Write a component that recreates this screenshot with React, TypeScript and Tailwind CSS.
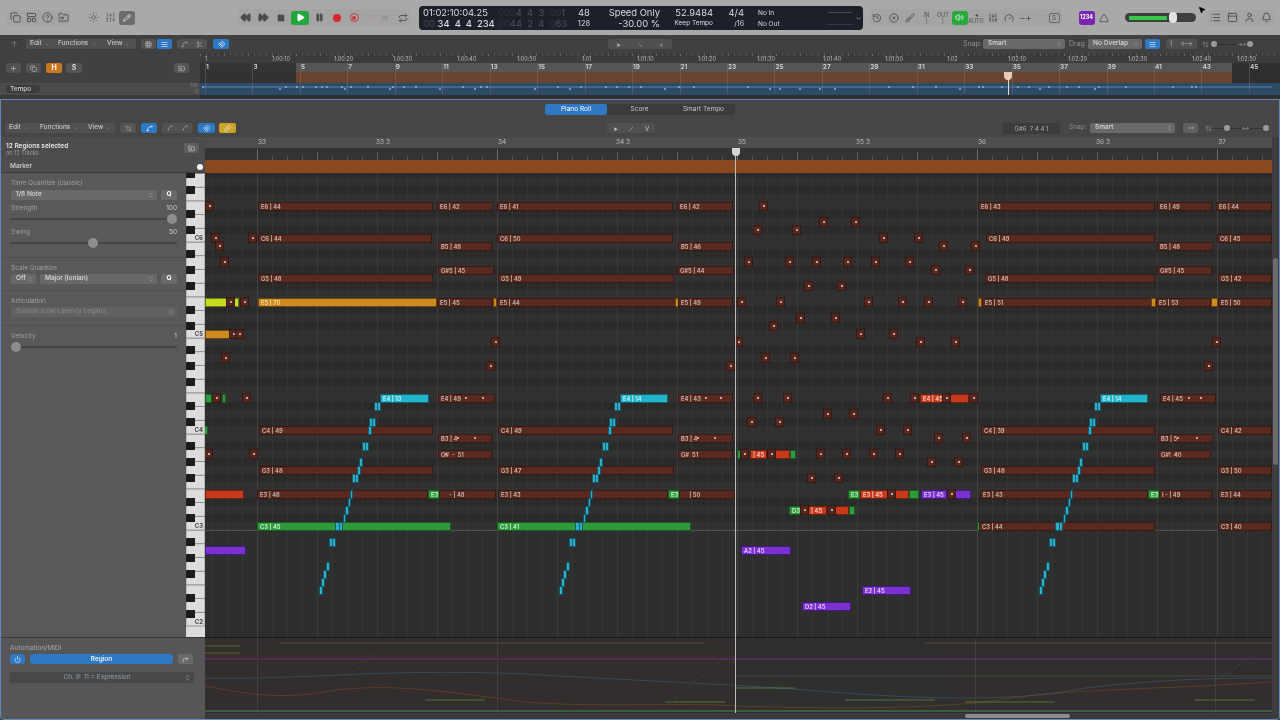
import React from 'react';
import {
  Bell, Copy, CircleHelp, Sun, SlidersVertical, Pencil, Rewind, FastForward, Square, Play, Pause, Repeat,
  History, CircleX, Volume2, Gauge, List, PanelTop, User, FolderInput, ChevronDown, ChevronsUpDown,
  Power, CornerUpRight, Plus, Grid3x3, AlignJustify, Spline, Magnet, Link, MousePointer2, LayoutPanelTop,
  Triangle, Scissors, ArrowUpDown, MoveHorizontal, Brush,
} from 'lucide-react';

type Kind = 'm' | 'o' | 'l' | 'c' | 'g' | 'r' | 'p';
type N = [number, number, number, Kind, string?];

const kindClass: Record<Kind, string> = {
  m: 'bg-[#5a2a22] border-[#361a14] text-[#cfbdb3]',
  o: 'bg-[#cf8a1f] border-[#6b470f] text-[#f0dcae]',
  l: 'bg-[#c6dc20] border-[#6e7a12] text-white',
  c: 'bg-[#22b4cc] border-[#14626f] text-[#d4f2f8]',
  g: 'bg-[#2f9a3a] border-[#185c20] text-[#d6f0d8]',
  r: 'bg-[#c93a1c] border-[#6e2010] text-[#f5d4c8]',
  p: 'bg-[#7a30d2] border-[#43197a] text-[#e4d2f8]',
};

const notes: N[] = [
  [258, 433, 206, 'm', 'E6 | 44'], [437, 493, 206, 'm', 'E6 | 42'], [497, 673, 206, 'm', 'E6 | 41'], [677, 733, 206, 'm', 'E6 | 42'],
  [978, 1155, 206, 'm', 'E6 | 43'], [1157, 1212, 206, 'm', 'E6 | 49'], [1216, 1272, 206, 'm', 'E6 | 44'],
  [258, 432, 238, 'm', 'C6 | 44'], [497, 673, 238, 'm', 'C6 | 50'], [986, 1155, 238, 'm', 'C6 | 49'], [1217, 1272, 238, 'm', 'C6 | 45'],
  [438, 492, 246, 'm', 'B5 | 48'], [678, 733, 246, 'm', 'B5 | 46'], [1157, 1213, 246, 'm', 'B5 | 48'],
  [438, 494, 270, 'm', 'G#5 | 45'], [677, 734, 270, 'm', 'G#5 | 44'], [1157, 1212, 270, 'm', 'G#5 | 45'],
  [258, 433, 278, 'm', 'G5 | 48'], [498, 674, 278, 'm', 'G5 | 49'], [985, 1155, 278, 'm', 'G5 | 48'], [1218, 1272, 278, 'm', 'G5 | 42'],
  [205, 227, 302, 'l'], [234, 239, 302, 'l'], [258, 437, 302, 'o', 'E5 | 70'], [437, 493, 302, 'm', 'E5 | 45'], [493, 497, 302, 'o'],
  [497, 676, 302, 'm', 'E5 | 44'], [675, 678, 302, 'o'], [678, 733, 302, 'm', 'E5 | 49'],
  [978, 982, 302, 'o'], [982, 1152, 302, 'm', 'E5 | 51'], [1151, 1156, 302, 'o'], [1156, 1211, 302, 'm', 'E5 | 53'], [1211, 1218, 302, 'o'], [1218, 1272, 302, 'm', 'E5 | 50'],
  [205, 230, 334, 'o'],
  [205, 212, 398, 'g'], [222, 225, 398, 'g'], [380, 429, 398, 'c', 'E4 | 13'], [438, 495, 398, 'm', 'E4 | 49'], [620, 668, 398, 'c', 'E4 | 14'], [678, 733, 398, 'm', 'E4 | 43'],
  [920, 943, 398, 'r', 'E4 | 45'], [950, 969, 398, 'r'], [1100, 1148, 398, 'c', 'E4 | 14'], [1160, 1216, 398, 'm', 'E4 | 45'],
  [259, 433, 430, 'm', 'C4 | 49'], [498, 673, 430, 'm', 'C4 | 49'], [981, 1155, 430, 'm', 'C4 | 39'], [1218, 1272, 430, 'm', 'C4 | 42'], [204, 207, 430, 'g'],
  [438, 492, 438, 'm', 'B3 | 4'], [678, 733, 438, 'm', 'B3 | 4'], [1158, 1213, 438, 'm', 'B3 | 5'],
  [438, 492, 454, 'm', 'G#  -  51'], [678, 733, 454, 'm', 'G#  51'], [1158, 1211, 454, 'm', 'G#!  40'],
  [737, 739, 454, 'g'], [750, 767, 454, 'r', '| 45'], [775, 790, 454, 'r'], [790, 796, 454, 'g'],
  [259, 433, 470, 'm', 'G3 | 48'], [498, 674, 470, 'm', 'G3 | 47'], [981, 1155, 470, 'm', 'G3 | 48'], [1218, 1272, 470, 'm', 'G3 | 50'],
  [205, 244, 494, 'r'], [257, 428, 494, 'm', 'E3 | 48'], [428, 440, 494, 'g', 'E3'], [439, 496, 494, 'm', '     - | 48'],
  [498, 668, 494, 'm', 'E3 | 43'], [668, 680, 494, 'g', 'E3'], [679, 735, 494, 'm', '     | 50'],
  [980, 1148, 494, 'm', 'E3 | 43'], [1148, 1160, 494, 'g', 'E3'], [1159, 1212, 494, 'm', 'I - | 49'], [1218, 1272, 494, 'm', 'E3 | 44'],
  [848, 860, 494, 'g', 'E3'], [860, 888, 494, 'r', 'E3 | 45'], [895, 909, 494, 'r'], [909, 919, 494, 'g'], [921, 947, 494, 'p', 'E3 | 45'], [955, 971, 494, 'p'],
  [789, 801, 510, 'g', 'D3'], [808, 827, 510, 'r', '| 45'], [835, 849, 510, 'r'], [849, 855, 510, 'g'],
  [257, 451, 526, 'g', 'C3 | 45'], [497, 691, 526, 'g', 'C3 | 41'], [977, 980, 526, 'g'], [979, 1155, 526, 'm', 'C3 | 44'], [1218, 1272, 526, 'm', 'C3 | 40'],
  [205, 246, 550, 'p'], [741, 791, 550, 'p', 'A2 | 45'], [862, 911, 590, 'p', 'E2 | 45'], [802, 851, 606, 'p', 'D2 | 45'],
];

const smallNotes: [number, number][] = [
  [209, 206], [215, 238], [219, 246], [224, 262], [252, 238], [230, 302], [244, 302], [233, 334], [239, 334], [225, 358], [495, 342], [490, 366],
  [763, 206], [757, 230], [796, 230], [823, 222], [855, 222], [883, 238], [918, 238], [943, 246], [975, 246],
  [748, 262], [789, 262], [816, 262], [847, 262], [875, 262], [909, 262], [935, 270], [969, 270], [808, 286], [841, 286],
  [741, 302], [780, 302], [868, 302], [902, 302], [928, 302], [962, 302], [800, 318], [835, 318], [773, 326], [860, 334], [893, 334],
  [738, 342], [920, 342], [955, 342], [765, 358], [794, 358], [730, 366], [1216, 342], [1208, 366],
  [216, 398], [246, 398], [757, 398], [787, 398], [887, 398], [914, 398], [946, 398], [973, 398], [827, 414], [853, 414], [751, 422], [779, 422],
  [880, 430], [907, 430], [938, 438], [966, 438], [253, 454], [208, 454], [820, 454], [846, 454], [873, 454], [899, 454], [744, 454], [771, 454],
  [931, 462], [958, 462], [811, 478], [838, 478], [891, 494], [951, 494], [804, 510], [831, 510],
];

// the cyan staircase repeats three times across the view
const stairs: [number, number, number][] = [
  [374, 380, 406], [369, 375, 422], [368, 371, 430], [362, 368, 446], [359, 362, 462], [357, 360, 470], [352, 358, 478],
  [350, 352, 494], [348, 350, 502], [345, 348, 510], [343, 345, 518], [335, 342, 526], [329, 335, 542], [326, 329, 566],
  [323, 326, 574], [321, 324, 582], [319, 322, 590],
];

const tickMarks: [number, number][] = [[465, 398], [482, 398], [457, 438], [474, 438], [697, 438], [714, 438], [1177, 438], [1196, 438], [1188, 398], [1200, 398], [705, 398], [720, 398], [445, 454], [1175, 454]];

const timeLabels: [string, number][] = [['1', 205], ['1:00:10', 272], ['1:00:20', 334], ['1:00:30', 393], ['1:00:40', 457], ['1:00:50', 517], ['1:01', 582], ['1:01:10', 637], ['1:01:20', 698], ['1:01:30', 757], ['1:01:40', 823], ['1:01:50', 885], ['1:02', 947], ['1:02:10', 1008], ['1:02:20', 1068], ['1:02:30', 1128], ['1:02:40', 1192], ['1:02:50', 1237]];
const tempoNodes = [203, 280, 286, 297, 303, 316, 322, 327, 342, 345, 351, 368, 390, 393, 404, 416, 440, 463, 475, 481, 487, 535, 558, 570, 581, 606, 617, 629, 641, 665, 679, 694, 748, 770, 780, 800, 820, 835, 889, 913, 936, 960, 979, 983, 1002, 1018, 1029, 1040, 1049, 1067, 1079, 1095, 1099, 1126, 1173, 1192, 1196];

const ink = 'text-[#4c4c4c]';

function Note({ n }: { n: N }) {
  const [a, b, y, k, label] = n;
  return (
    <div
      className={`absolute h-[9px] border overflow-hidden whitespace-pre pl-[2px] text-[5.8px] leading-[7px] font-semibold ${kindClass[k]}`}
      style={{ left: a - 205, width: b - a, top: y - 173 - 4 }}
    >
      {label}
    </div>
  );
}

function SmallNote({ x, y }: { x: number; y: number }) {
  return (
    <div className="absolute w-[9px] h-[10px] bg-[#55271f] border border-[#341813] flex items-center justify-center" style={{ left: x - 205 - 4, top: y - 173 - 5 }}>
      <div className="w-[2px] h-[2px] bg-[#c8a89e]" />
    </div>
  );
}

function Stair({ a, b, y }: { a: number; b: number; y: number }) {
  return (
    <div className="absolute h-[9px] bg-[#2cb0ca] border border-[#125a6a] flex justify-center" style={{ left: a - 205, width: b - a + 1, top: y - 173 - 4 }}>
      {b - a > 4 && <div className="w-px h-full bg-[#125a6a]" />}
    </div>
  );
}

function GridLines() {
  const rows = [];
  for (let i = 0; i < 60; i++) {
    const y = 530 - 8 * i - 173;
    const pc = i % 12;
    rows.push(<rect key={i} x={0} y={y - 8} width={1068} height={8} fill={[1, 3, 6, 8, 10].includes(pc) ? '#2a2a2a' : '#313131'} />);
  }
  const lines = [];
  for (let i = -4; i < 76; i++) {
    const x = 257 - 205 + i * 15;
    const color = (i % 16 + 16) % 16 === 0 ? '#454545' : (i % 4 + 4) % 4 === 0 ? '#3e3e3e' : '#373737';
    lines.push(<line key={i} x1={x + 0.5} x2={x + 0.5} y1={0} y2={464} stroke={color} strokeWidth={1} opacity={0.85} />);
  }
  return (
    <svg className="absolute inset-0" width={1067} height={464}>
      {rows}
      {lines}
      <line x1={0} x2={1067} y1={357.5} y2={357.5} stroke="#505050" />
    </svg>
  );
}

function BarTicks({ width, start, step, height }: { width: number; start: number; step: number; height: number }) {
  const out = [];
  for (let i = 0; i * step + start < width; i++) {
    const x = start + i * step;
    const top = i % 16 === 0 ? 1 : i % 4 === 0 ? height - 8 : height - 4;
    out.push(<line key={i} x1={x + 0.5} x2={x + 0.5} y1={top} y2={height} stroke={i % 16 === 0 ? '#707070' : i % 4 === 0 ? '#5e5e5e' : '#525252'} />);
  }
  return <svg width={width} height={height}>{out}</svg>;
}

function Piano() {
  const keys = [];
  for (let o = -1; o < 6; o++) {
    const bottom = 530 - 96 * o - 173;
    for (let k = 0; k < 7; k++) {
      const y = bottom - ((k + 1) * 96) / 7;
      keys.push(<rect key={`${o}w${k}`} x={0} y={y} width={19} height={96 / 7} fill="#dcdcdc" stroke="#7d7d7d" strokeWidth={0.7} />);
    }
    [1, 3, 6, 8, 10].forEach((p) => {
      keys.push(<rect key={`${o}b${p}`} x={0} y={bottom - 8 * (p + 1)} width={9} height={8} fill="#1c1c1c" />);
    });
    keys.push(
      <text key={`${o}t`} x={17} y={bottom - 2} textAnchor="end" fontSize={6} fontWeight={700} fill="#444">{`C${3 + o}`}</text>,
    );
  }
  return <svg width={19} height={464} className="shrink-0 bg-[#dcdcdc]">{keys}</svg>;
}

function Automation() {
  return (
    <svg className="absolute inset-0" width={1067} height={76}>
      <rect width={1067} height={76} fill="#312e2d" />
      <rect x={530} width={220} height={76} fill="#2f2f30" />
      <path d="M0 21H1067" stroke="#6a2a78" strokeWidth={2} opacity={0.6} />
      <path d="M0 18H530" stroke="#70302a" opacity={0.45} />
      <path d="M75 5H500M720 5H1067" stroke="#7c5a34" opacity={0.55} />
      <path d="M0 8H35M0 15H35" stroke="#7b7a36" opacity={0.7} />
      <path d="M0 73H1067" stroke="#3f8e52" strokeWidth={1.5} opacity={0.65} />
      <path d="M0 48C60 60 90 60 130 52C190 46 230 52 320 64C400 70 480 64 530 68C600 70 700 72 780 64C860 50 950 52 1067 44" stroke="#8a4a2c" fill="none" opacity={0.5} />
      <path d="M0 40C100 42 180 30 320 36C420 42 520 46 600 52C700 60 800 66 880 50C950 42 1000 40 1067 40" stroke="#3e6076" fill="none" opacity={0.55} />
      <path d="M530 38H1067" stroke="#49604a" opacity={0.6} />
      <path d="M120 62L170 14M470 60L520 20M1000 50L1050 16" stroke="#2d6a70" strokeDasharray="2 3" opacity={0.6} />
      <path d="M220 62H280M460 64H520M530 50H590M640 62H730M990 62H1050M760 64H850" stroke="#5d8e3e" opacity={0.7} />
      {[52, 292, 530, 770, 1010].map((x) => <path key={x} d={`M${x + 0.5} 0V76`} stroke="#555" opacity={0.45} />)}
    </svg>
  );
}

function TopIcon({ children, className = '' }: { children: React.ReactNode; className?: string }) {
  return <div className={`w-[16px] h-[16px] flex items-center justify-center ${ink} ${className}`}>{children}</div>;
}

function Lcd() {
  return (
    <div className="w-[444px] h-[24px] bg-[#1c2029] rounded-[4px] flex text-[#d8dce0] relative text-[9.4px] leading-[11px]">
      <div className="w-[79px] pl-[4px] pt-[1px] whitespace-nowrap">
        <div>01:02:10:04.25</div>
        <div className="font-medium"><span className="text-[#3c414c]">00</span> 34&nbsp; 4&nbsp; 4&nbsp; 234</div>
      </div>
      <div className="w-[68px] pt-[1px] whitespace-nowrap text-[#4d525e]">
        <div><span className="text-[#2f333d]">000</span>4&nbsp; 4&nbsp; 3&nbsp; <span className="text-[#2f333d]">00</span>1</div>
        <div><span className="text-[#2f333d]">00</span>44&nbsp; 2&nbsp; 4&nbsp; <span className="text-[#2f333d]">0</span>63</div>
      </div>
      <div className="w-[36px] pt-[1px] text-center">
        <div>48</div>
        <div className="text-[7.5px]">128</div>
      </div>
      <div className="w-[58px] pt-[1px] text-right">
        <div className="whitespace-nowrap">Speed Only</div>
        <div className="whitespace-nowrap">-30.00 %</div>
      </div>
      <div className="w-[53px] pt-[1px] text-right">
        <div>52.9484</div>
        <div className="text-[6.5px] whitespace-nowrap">Keep Tempo</div>
      </div>
      <div className="w-[31px] pt-[1px] text-right">
        <div>4/4</div>
        <div className="text-[7px]">/16</div>
      </div>
      <div className="ml-[14px] pt-[2px] text-[6.5px] leading-[11px]">
        <div>No In</div>
        <div>No Out</div>
      </div>
      <div className="absolute left-[409px] top-[6px] flex flex-col gap-[11px]">
        <div className="w-[24px] h-px bg-[#444a55]" />
        <div className="w-[24px] h-px bg-[#333741]" />
      </div>
      <ChevronDown className="absolute right-[1px] top-[9px] w-[7px] h-[7px] text-[#bbb]" />
    </div>
  );
}

function TopBar() {
  return (
    <div className="h-[35px] shrink-0 bg-[#a9a9a9] flex items-center relative">
      <div className="ml-[7px] flex items-center bg-[#a4a4a4] rounded h-[16px]">
        <TopIcon><Copy size={11} /></TopIcon>
        <TopIcon><LayoutPanelTop size={11} /></TopIcon>
        <TopIcon><CircleHelp size={11} /></TopIcon>
        <TopIcon><FolderInput size={11} /></TopIcon>
      </div>
      <div className="ml-[14px] flex items-center gap-[1px]">
        <TopIcon className="opacity-70"><Sun size={11} /></TopIcon>
        <TopIcon className="opacity-70"><SlidersVertical size={11} /></TopIcon>
        <div className="w-[16px] h-[14px] rounded-[3px] bg-[#6c6c6c] flex items-center justify-center"><Pencil size={8} className="text-white" /></div>
      </div>
      <div className="ml-[102px] flex items-center gap-[2px] bg-[#a4a4a4] rounded h-[17px]">
        <TopIcon><Rewind size={11} fill="currentColor" /></TopIcon>
        <TopIcon><FastForward size={11} fill="currentColor" /></TopIcon>
        <TopIcon><Square size={8} fill="currentColor" /></TopIcon>
        <div className="w-[18px] h-[14px] rounded-[3px] bg-[#20a63a] flex items-center justify-center"><Play size={9} className="text-white" fill="white" /></div>
        <TopIcon><Pause size={9} fill="currentColor" /></TopIcon>
        <div className="w-[16px] flex justify-center"><div className="w-[8px] h-[8px] rounded-full bg-[#d8262c]" /></div>
        <div className="w-[14px] flex justify-center"><div className="w-[9px] h-[9px] rounded-full border border-[#c8383c] flex items-center justify-center"><div className="w-[4px] h-[4px] rounded-full bg-[#c8383c]" /></div></div>
        <div className="w-[14px] text-center text-[6px] text-[#b98a70]">-1</div>
        <div className="w-[12px] text-center text-[6px] text-[#777]">)))</div>
        <TopIcon className="ml-[2px]"><Repeat size={10} /></TopIcon>
      </div>
      <div className="ml-[8px]"><Lcd /></div>
      <div className="ml-[6px] flex items-center gap-[0.5px] bg-[#a4a4a4] rounded h-[17px] pr-[2px]">
        <TopIcon><History size={10} /></TopIcon>
        <TopIcon><CircleX size={10} /></TopIcon>
        <TopIcon><Brush size={10} /></TopIcon>
        <div className={`w-[16px] text-center text-[5.5px] leading-[6px] ${ink}`}>IN<br />|</div>
        <div className={`w-[16px] text-center text-[5.5px] leading-[6px] ${ink}`}>OUT<br />|</div>
        <div className="w-[16px] h-[14px] rounded-[3px] bg-[#26a83a] flex items-center justify-center"><Volume2 size={9} className="text-white" /></div>
        <div className={`w-[16px] text-center text-[5.5px] leading-[6px] ${ink}`}>◂<br />AUTO</div>
        <TopIcon><SlidersVertical size={10} /></TopIcon>
        <TopIcon><Gauge size={10} /></TopIcon>
        <div className={`w-[16px] text-center text-[9px] leading-[9px] ${ink}`}>−+</div>
        <div className="w-[14px] text-center text-[8px] text-[#8f8f8f]">⟋</div>
        <div className={`w-[11px] h-[10px] rounded-[2px] border border-[#666] text-center text-[6px] leading-[8px] ${ink}`}>S</div>
      </div>
      <div className="ml-[17px] w-[16px] h-[14px] rounded-[3px] bg-[#7a24b4] text-white text-[5.5px] font-bold flex items-center justify-center">1234</div>
      <TopIcon className="ml-[1px]"><Triangle size={10} /></TopIcon>
      <div className="ml-[13px] w-[71px] h-[9px] rounded-full bg-[#3c3f3e] relative flex items-center pl-[4px]">
        <div className="w-[38px] h-[4px] bg-[#38c84a] rounded-[1px]" />
        <div className="absolute left-[44px] top-[-1px] w-[8px] h-[11px] rounded-full bg-[#e4e4e4]" />
      </div>
      <div className="ml-[12px] flex items-center gap-[1px] bg-[#a4a4a4] rounded h-[16px]">
        <TopIcon><List size={11} /></TopIcon>
        <TopIcon><PanelTop size={11} /></TopIcon>
        <TopIcon><User size={11} /></TopIcon>
        <TopIcon><Bell size={11} /></TopIcon>
      </div>
      <MousePointer2 className="absolute left-[1198px] top-[6px] text-black" size={8} fill="black" />
    </div>
  );
}

function Menu({ label, w }: { label: string; w: number }) {
  return (
    <div className="h-[10px] flex items-center bg-[#505050] text-[#c9c9c9] text-[6.5px] font-medium pl-[4px] gap-[3px]" style={{ width: w }}>
      {label}
      <ChevronDown size={5} className="text-[#999]" />
    </div>
  );
}

function SmallBtn({ children, className = 'bg-[#525252] text-[#aaa]' }: { children?: React.ReactNode; className?: string }) {
  return <div className={`w-[15px] h-[10px] flex items-center justify-center rounded-[2px] ${className}`}>{children}</div>;
}

function Dropdown({ label, className = '', muted = false }: { label: string; className?: string; muted?: boolean }) {
  return (
    <div className={`h-[10px] rounded-[2px] flex items-center justify-between pl-[5px] pr-[3px] text-[6.5px] ${muted ? 'bg-[#4f4f4f] text-[#8a8a8a]' : 'bg-[#696969] text-[#dcdcdc] font-medium'} ${className}`}>
      <span className="whitespace-nowrap">{label}</span>
      <ChevronsUpDown size={6} className="text-[#a8a8a8]" />
    </div>
  );
}

function TracksArea() {
  return (
    <div className="h-[64px] shrink-0 bg-[#414141] flex flex-col">
      <div className="h-[18px] shrink-0 flex items-center bg-[#404040] text-[#ccc]">
        <span className="ml-[11px] text-[8px] text-[#777] w-[15px]">↑</span>
        <div className="flex"><Menu label="Edit" w={28} /><Menu label="Functions" w={49} /><Menu label="View" w={33} /></div>
        <div className="ml-[5px] flex gap-[1px]">
          <SmallBtn className="bg-[#525252] text-[#bbb]"><Grid3x3 size={7} /></SmallBtn>
          <SmallBtn className="bg-[#2f78c4] text-white"><AlignJustify size={7} /></SmallBtn>
        </div>
        <div className="ml-[5px] flex">
          <SmallBtn><Spline size={7} /></SmallBtn>
          <SmallBtn><Scissors size={7} /></SmallBtn>
        </div>
        <SmallBtn className="ml-[6px] w-[16px] bg-[#2f78c4] text-white"><Magnet size={7} /></SmallBtn>
        <div className="ml-[379px] w-[64px] shrink-0 h-[10px] flex bg-[#505050] text-[#bbb] items-center justify-around rounded-[2px] text-[6px]"><span>➤</span><span>⟍</span><span>♅</span></div>
        <span className="ml-[291px] w-[20px] text-[7px] text-[#8f8f8f]">Snap:</span>
        <Dropdown label="Smart" className="w-[82px] shrink-0" />
        <span className="ml-[4px] w-[19px] text-[7px] text-[#8f8f8f]">Drag:</span>
        <Dropdown label="No Overlap" className="w-[54px] shrink-0" />
        <SmallBtn className="ml-[3px] bg-[#2f78c4] text-white"><AlignJustify size={7} /></SmallBtn>
        <div className="ml-[6px] w-[31px] shrink-0 h-[10px] flex justify-around items-center bg-[#505050] rounded-[2px] text-[7px] text-[#aaa]"><span>I</span><span>⟷</span></div>
        <ArrowUpDown size={7} className="ml-[5px] shrink-0 text-[#999]" />
        <div className="ml-[2px] w-[6px] h-[6px] shrink-0 rounded-full bg-[#9a9a9a]" />
        <div className="w-[20px] h-px shrink-0 bg-[#2f2f2f]" />
        <MoveHorizontal size={7} className="ml-[2px] shrink-0 text-[#999]" />
        <div className="ml-[1px] w-[6px] h-[6px] shrink-0 rounded-full bg-[#9a9a9a]" />
      </div>
      <div className="flex flex-1 min-h-0">
        <div className="w-[200px] shrink-0 flex flex-col">
          <div className="h-[30px] flex items-center pl-[6px]">
            <SmallBtn className="bg-[#525252] text-[#ccc]"><Plus size={7} /></SmallBtn>
            <SmallBtn className="ml-[5px] bg-[#525252] text-[#bbb]"><Copy size={7} /></SmallBtn>
            <div className="ml-[5px] w-[16px] h-[10px] rounded-[2px] bg-[#c9781f] text-white text-[7px] font-bold flex items-center justify-center">H</div>
            <div className="ml-[4px] w-[16px] h-[10px] rounded-[2px] bg-[#545454] text-[#ccc] text-[7px] font-bold flex items-center justify-center">S</div>
            <SmallBtn className="ml-[92px] bg-[#555] text-[#ccc]"><FolderInput size={7} /></SmallBtn>
          </div>
          <div className="h-[12px] bg-[#4b4b4b] flex items-center pl-[6px] relative">
            <div className="h-[8px] w-[34px] rounded-full bg-[#3b3b3b] text-[#cfcfcf] text-[6.5px] leading-[8px] font-medium pl-[4px]">Tempo</div>
            <span className="absolute right-[2px] top-0 text-[4.5px] leading-[6px] text-[#888]">100<br /><span className="pl-[5px]">0</span></span>
          </div>
          <div className="flex-1 bg-[#3a3a3a]" />
        </div>
        <div className="flex-1 relative bg-[#2f2f2f] overflow-hidden">
          <div className="h-[10px] bg-[#3c3c3c] relative">
            <div className="absolute inset-0"><BarTicks width={1080} start={0} step={6} height={3} /></div>
            {timeLabels.map(([t, x]) => (
              <span key={t} className="absolute top-[2px] text-[5.5px] leading-[8px] text-[#b8b8b8] whitespace-nowrap" style={{ left: x - 200 }}>{t}</span>
            ))}
          </div>
          <div className="h-[9px] flex">
            <div className="w-[96px] bg-[#343434]" />
            <div className="w-[936px] bg-[#555555]" />
          </div>
          <div className="h-[11px] flex">
            <div className="w-[96px] bg-[#323232]" />
            <div className="w-[936px] bg-[#69432f]" />
          </div>
          {Array.from({ length: 23 }, (_, i) => (
            <span key={i} className="absolute top-[10px] text-[6.5px] leading-[9px] font-semibold text-[#d4d4d4]" style={{ left: 6 + 47.45 * i }}>{1 + i * 2}</span>
          ))}
          {Array.from({ length: 23 }, (_, i) => (
            <div key={i} className="absolute top-[10px] w-px h-[31px] bg-[#8a8a8a] opacity-30" style={{ left: 5 + 47.45 * i }} />
          ))}
          <div className="h-[12px] bg-[#2d4a66]" />
          <svg className="absolute left-0 top-[30px]" width={1080} height={12}>
            <path d="M3 4H1072" stroke="#5f93c6" strokeWidth={0.8} />
            {tempoNodes.map((x) => <circle key={x} cx={x - 200} cy={x % 5 === 0 ? 6 : 4} r={0.9} fill="#8fbbe6" />)}
          </svg>
          <div className="absolute left-[804px] top-[19px] w-[8px] h-[8px] rounded-b-full rounded-t-[2px] bg-[#e8c8b4]" />
          <div className="absolute left-[808px] top-[23px] w-px h-[19px] bg-[#e8d8cc]" />
        </div>
      </div>
    </div>
  );
}

function Slider({ label, value, pos, top }: { label: string; value: string; pos: number; top: string }) {
  return (
    <div className={top}>
      <div className="flex justify-between pr-[9px] pl-[10px] text-[6.5px] leading-[8px]">
        <span className="text-[#a0a0a0]">{label}</span>
        <span className="text-[#d0d0d0]">{value}</span>
      </div>
      <div className="relative h-[12px] mt-[1px] mx-[10px] w-[166px] flex items-center">
        <div className="w-full h-[2px] bg-[#444]" />
        <div className="absolute top-[1px] w-[10px] h-[10px] rounded-full bg-[#8e8e8e]" style={{ left: pos }} />
      </div>
    </div>
  );
}

function QBtn() {
  return <div className="w-[16px] h-[10px] rounded-[2px] bg-[#696969] text-white text-[6.5px] font-bold flex items-center justify-center">Q</div>;
}

function Inspector() {
  return (
    <div className="w-[185px] shrink-0 bg-[#595959] flex flex-col">
      <div className="pt-[6px] pb-[8px] border-b border-[#505050]">
        <div className="pl-[10px] text-[6.5px] leading-[8px] text-[#a0a0a0]">Time Quantize (classic)</div>
        <div className="mt-[3px] flex gap-[4px] pl-[10px]">
          <Dropdown label="1/8 Note" className="w-[146px]" />
          <QBtn />
        </div>
        <Slider label="Strength" value="100" pos={156} top="mt-[4px]" />
        <Slider label="Swing" value="50" pos={77} top="mt-[3px]" />
      </div>
      <div className="pt-[6px] pb-[6px] border-b border-[#505050]">
        <div className="pl-[10px] text-[6.5px] leading-[8px] text-[#a0a0a0]">Scale Quantize</div>
        <div className="mt-[2px] flex gap-[4px] pl-[10px]">
          <Dropdown label="Off" className="w-[25px]" />
          <Dropdown label="Major (Ionian)" className="w-[117px]" />
          <QBtn />
        </div>
      </div>
      <div className="pt-[6px] pb-[8px] border-b border-[#505050]">
        <div className="pl-[10px] text-[6.5px] leading-[8px] text-[#a0a0a0]">Articulation</div>
        <Dropdown label="Sustain (Low Latency Legato)" muted className="mt-[2px] ml-[10px] w-[166px] bg-[#626262]" />
      </div>
      <Slider label="Velocity" value="1" pos={0} top="mt-[6px]" />
    </div>
  );
}

function LeftColumn() {
  return (
    <div className="w-[204px] shrink-0 flex flex-col">
      <div className="h-[23px] bg-[#4c4c4c] relative pl-[5px] pt-[5px]">
        <div className="text-[6.5px] leading-[8px] font-semibold text-[#e4e4e4]">12 Regions selected</div>
        <div className="text-[5.5px] leading-[7px] text-[#9a9a9a]">on 12 Tracks</div>
        <SmallBtn className="absolute left-[183px] top-[6px] bg-[#5f5f5f] text-[#ddd]"><FolderInput size={7} /></SmallBtn>
      </div>
      <div className="h-[13px] bg-[#4e4e4e] border-b border-[#3a3a3a] flex items-center justify-between pl-[9px] pr-[2px] pt-[1px]">
        <span className="text-[6.5px] font-medium text-[#d4d4d4]">Marker</span>
        <div className="w-[6px] h-[6px] rounded-full bg-white" />
      </div>
      <div className="h-[464px] flex overflow-hidden">
        <Inspector />
        <Piano />
      </div>
      <div className="flex-1 bg-[#565656] border-t border-[#3a3a3a] pl-[9px] pt-[6px]">
        <div className="text-[6.5px] leading-[8px] text-[#a8a8a8]">Automation/MIDI</div>
        <div className="mt-[2px] flex items-center">
          <div className="w-[15px] h-[10px] rounded-[3px] bg-[#2f78c4] flex items-center justify-center"><Power size={7} className="text-white" /></div>
          <div className="ml-[5px] w-[143px] h-[10px] rounded-[3px] bg-[#2f78c4] text-white text-[6.5px] leading-[10px] font-medium text-center">Region</div>
          <div className="ml-[5px] w-[15px] h-[10px] rounded-[2px] bg-[#6a6a6a] flex items-center justify-center"><CornerUpRight size={7} className="text-[#ddd]" /></div>
        </div>
        <div className="mt-[8px] w-[184px] h-[11px] rounded-[2px] bg-[#484848] flex items-center justify-between pr-[3px] text-[6.5px] text-[#8fa3b0]">
          <span className="flex-1 text-center">Ch. 9: 11 = Expression</span>
          <ChevronsUpDown size={7} className="text-[#b0b0b0]" />
        </div>
      </div>
    </div>
  );
}

function RollColumn() {
  return (
    <div className="w-[1067px] shrink-0 flex flex-col relative">
      <div className="h-[11px] bg-[#4e4e4e] relative">
        {[['33', 262], ['33 3', 383], ['34', 502], ['34 3', 623], ['35', 742], ['35 3', 863], ['36', 982], ['36 3', 1103], ['37', 1222]].map(([t, x]) => (
          <span key={t} className="absolute top-[1px] text-[6.5px] leading-[8px] text-[#bdbdbd] whitespace-nowrap -translate-x-1/2" style={{ left: Number(x) - 205 }}>{t}</span>
        ))}
      </div>
      <div className="h-[12px] bg-[#333333]">
        <BarTicks width={1067} start={52} step={15} height={12} />
      </div>
      <div className="h-[13px] bg-[#8a481e]" />
      <div className="h-[464px] relative overflow-hidden bg-[#2e2e2e]">
        <GridLines />
        {notes.map((n, i) => <Note key={i} n={n} />)}
        {tickMarks.map(([x, y], i) => (
          <div key={i} className="absolute w-[2px] h-[2px] bg-[#c8a89e]" style={{ left: x - 205, top: y - 174 }} />
        ))}
        {smallNotes.map(([x, y], i) => <SmallNote key={i} x={x} y={y} />)}
        {[0, 240, 720].map((off) => stairs.map(([a, b, y], i) => <Stair key={`${off}-${i}`} a={a + off} b={b + off} y={y} />))}
      </div>
      <div className="h-[76px] relative border-t border-[#161616]">
        <Automation />
      </div>
      <div className="flex-1 bg-[#3a3a3a] relative">
        <div className="absolute left-[760px] top-[1px] w-[105px] h-[4px] rounded-full bg-[#8c8c8c]" />
      </div>
      {/* playhead */}
      <div className="absolute left-[530px] top-[11px] w-px h-[565px] bg-[#bcbcbc]" />
      <div className="absolute left-[527px] top-[11px] w-[8px] h-[8px] rounded-b-full rounded-t-[2px] bg-[#d4d4d4]" />
    </div>
  );
}

export default function App() {
  return (
    <div className="w-[1280px] h-[720px] overflow-hidden flex flex-col bg-[#424242] font-['Inter','Liberation_Sans',sans-serif] blur-[0.35px]">
      <TopBar />
      <TracksArea />
      <div className="flex-1 flex flex-col min-h-0 border border-[#5f8cb8] rounded-b-[4px] overflow-hidden bg-[#464646]">
        <div className="h-[19px] shrink-0 flex items-center justify-center">
          <div className="w-[190px] h-[11px] bg-[#3b3b3b] rounded-[2px] flex text-[6.5px] text-[#c4c4c4] items-center">
            <div className="w-[62px] h-full rounded-[2px] bg-[#2f78c4] text-white text-center leading-[11px]">Piano Roll</div>
            <div className="w-[65px] text-center">Score</div>
            <div className="w-[63px] text-center">Smart Tempo</div>
          </div>
        </div>
        <div className="h-[18px] shrink-0 flex items-center">
          <div className="ml-[4px] flex"><Menu label="Edit" w={31} /><Menu label="Functions" w={48} /><Menu label="View" w={31} /></div>
          <SmallBtn className="ml-[5px] w-[16px] bg-[#555] text-[#aaa]"><ArrowUpDown size={7} /></SmallBtn>
          <SmallBtn className="ml-[5px] w-[16px] bg-[#2f78c4] text-white"><Spline size={7} /></SmallBtn>
          <div className="ml-[5px] w-[31px] h-[10px] rounded-[2px] bg-[#525252] flex justify-around items-center text-[#aaa]"><Spline size={6} /><Spline size={6} /></div>
          <SmallBtn className="ml-[5px] w-[17px] bg-[#2f78c4] text-white"><Magnet size={7} /></SmallBtn>
          <SmallBtn className="ml-[4px] w-[17px] bg-[#c9a227] text-white"><Link size={7} /></SmallBtn>
          <div className="ml-[371px] w-[48px] shrink-0 h-[10px] bg-[#505050] rounded-[2px] flex justify-around items-center text-[#ccc] text-[6px]"><span>➤</span><span>⟋</span><span>V</span></div>
          <div className="ml-[348px] w-[57px] shrink-0 h-[11px] bg-[#3c3c3c] text-[6px] text-[#b0b0b0] text-center leading-[11px]">G#6&nbsp; 7 4 4 1</div>
          <span className="ml-[9px] w-[21px] shrink-0 text-[6.5px] text-[#8f8f8f]">Snap:</span>
          <Dropdown label="Smart" className="w-[85px] shrink-0" />
          <SmallBtn className="ml-[8px] w-[13px] shrink-0 bg-[#5f5f5f] text-[#bbb]"><MoveHorizontal size={6} /></SmallBtn>
          <ArrowUpDown size={7} className="ml-[7px] shrink-0 text-[#999]" />
          <div className="w-[12px] h-px shrink-0 bg-[#333]" />
          <div className="w-[6px] h-[6px] shrink-0 rounded-full bg-[#9a9a9a]" />
          <div className="w-[12px] h-px shrink-0 bg-[#333]" />
          <MoveHorizontal size={7} className="shrink-0 text-[#999]" />
          <div className="w-[14px] h-px shrink-0 bg-[#333]" />
          <div className="w-[6px] h-[6px] shrink-0 rounded-full bg-[#9a9a9a]" />
        </div>
        <div className="flex-1 flex min-h-0">
          <LeftColumn />
          <RollColumn />
          <div className="flex-1 bg-[#3d3d3d] relative">
            <div className="absolute left-[1px] top-[121px] w-[5px] h-[207px] rounded-full bg-[#6b6b6b]" />
          </div>
        </div>
      </div>
    </div>
  );
}
